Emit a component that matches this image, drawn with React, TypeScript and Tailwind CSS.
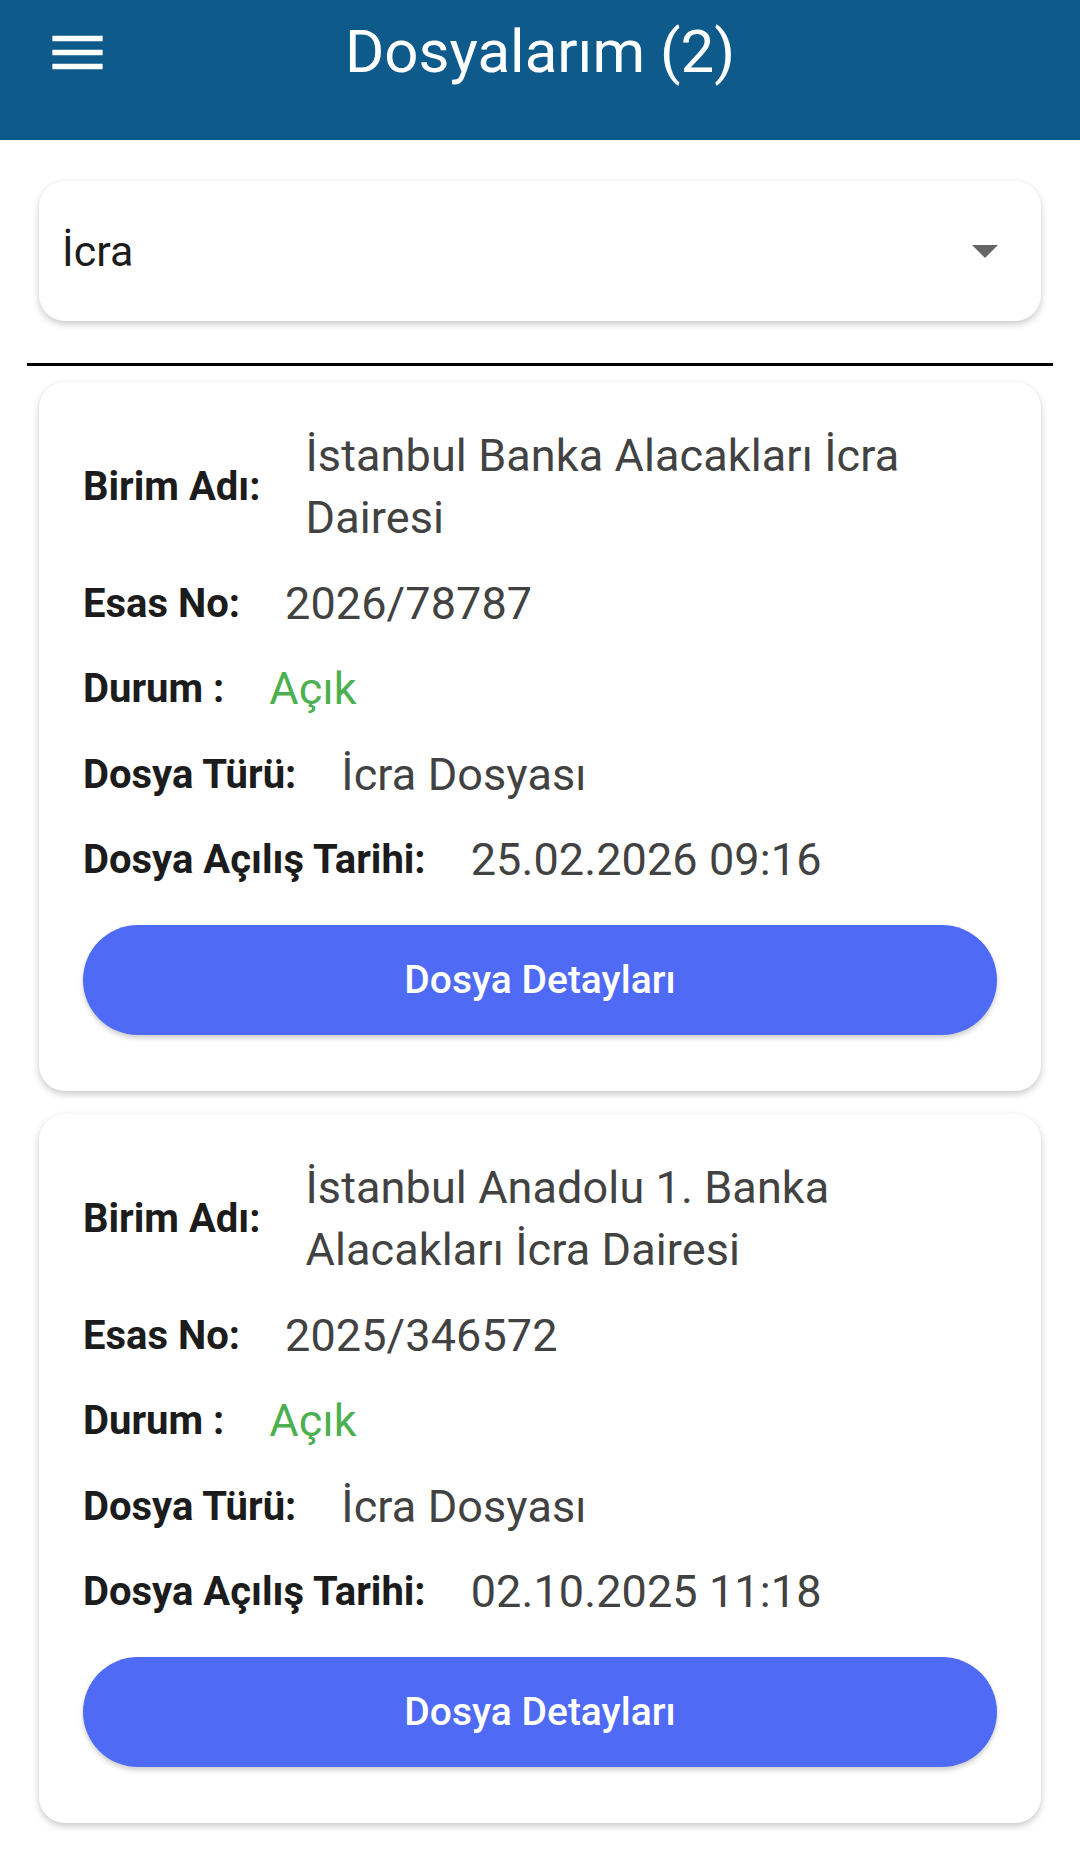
import React from "react";

type Dosya = {
  birim: string;
  esas: string;
  durum: string;
  tur: string;
  tarih: string;
};

const dosyalar: Dosya[] = [
  {
    birim: "İstanbul Banka Alacakları İcra Dairesi",
    esas: "2026/78787",
    durum: "Açık",
    tur: "İcra Dosyası",
    tarih: "25.02.2026 09:16",
  },
  {
    birim: "İstanbul Anadolu 1. Banka Alacakları İcra Dairesi",
    esas: "2025/346572",
    durum: "Açık",
    tur: "İcra Dosyası",
    tarih: "02.10.2025 11:18",
  },
];

function Row({
  label,
  value,
  valueClass = "text-[#424242]",
}: {
  label: string;
  value: string;
  valueClass?: string;
}) {
  return (
    <div className="flex items-center gap-[45px]">
      <span className="shrink-0 text-[40px] font-bold text-[#1c1c1c] leading-[62px]">
        {label}
      </span>
      <span className={`text-[45px] tracking-[0.1px] leading-[62px] ${valueClass}`}>{value}</span>
    </div>
  );
}

function DosyaCard({ d }: { d: Dosya }) {
  return (
    <div className="mx-[39px] rounded-[26px] bg-white px-[44px] pt-[43px] pb-[56px] shadow-[0_3px_7px_rgba(0,0,0,0.22)]">
      <div className="flex flex-col gap-[23.5px]">
        <Row label="Birim Adı:" value={d.birim} />
        <Row label="Esas No:" value={d.esas} />
        <Row label="Durum :" value={d.durum} valueClass="text-[#4caf50]" />
        <Row label="Dosya Türü:" value={d.tur} />
        <Row label="Dosya Açılış Tarihi:" value={d.tarih} />
      </div>
      <button className="mt-[34px] flex h-[110px] w-full items-center justify-center rounded-full bg-[#4f6bf5] text-[39px] font-medium text-white shadow-[0_3px_5px_rgba(0,0,0,0.2)]">
        Dosya Detayları
      </button>
    </div>
  );
}

export default function App() {
  return (
    <div className="min-h-screen bg-white font-['Roboto',sans-serif]">
      <header className="h-[140px] bg-[#0e5a8b]">
        <div className="grid h-[104px] grid-cols-[1fr_auto_1fr] items-center">
          <div className="pl-[44px]">
            <svg width="67" height="67" viewBox="0 0 24 24" fill="white">
              <path d="M3 18h18v-2H3v2zm0-5h18v-2H3v2zm0-7v2h18V6H3z" />
            </svg>
          </div>
          <h1 className="text-[60px] text-white">Dosyalarım (2)</h1>
          <div />
        </div>
      </header>

      <div className="mx-[39px] mt-[41px] flex h-[140px] items-center justify-between rounded-[26px] bg-white pl-[23px] pr-[43px] shadow-[0_3px_7px_rgba(0,0,0,0.22)]">
        <span className="text-[43px] text-[#1c1c1c]">İcra</span>
        <svg width="26" height="13" viewBox="0 0 26 13" fill="#666666">
          <path d="M0 0h26L13 13z" />
        </svg>
      </div>

      <div className="mx-[27px] mt-[42px] h-[3px] bg-black" />

      <div className="mt-[16px] flex flex-col gap-[23px] pb-[40px]">
        {dosyalar.map((d) => (
          <DosyaCard key={d.esas} d={d} />
        ))}
      </div>
    </div>
  );
}
